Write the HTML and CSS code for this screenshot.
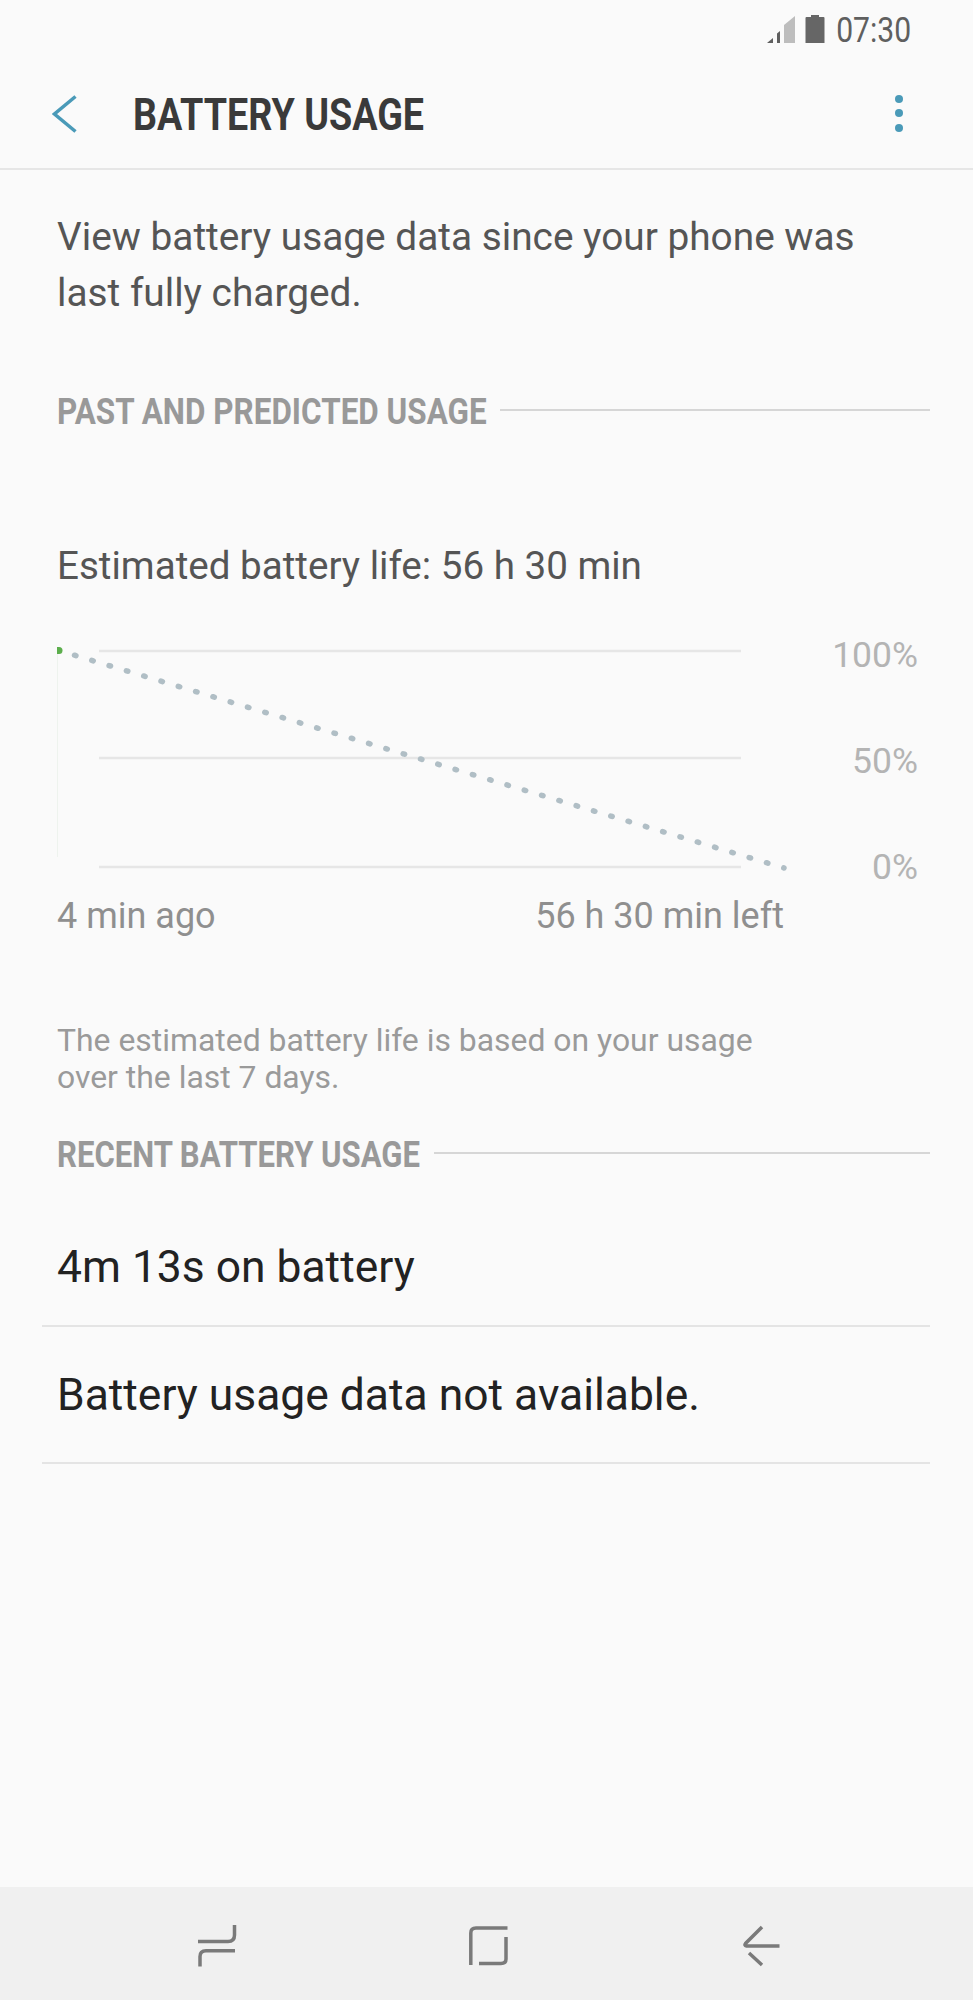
FILE: index.html
```html
<!DOCTYPE html>
<html lang="en">
<head>
<meta charset="utf-8">
<title>Battery usage</title>
<link rel="stylesheet" href="styles.css">
</head>
<body>
<div class="screen">
  <div class="status">
    <svg class="sig" width="30" height="30" viewBox="0 0 30 30"><path class="sig-on" d="M1 29 7 24V29Z"/><path class="sig-on" d="M11 29V19.500L14 17V29Z"/><path class="sig-off" d="M18 29V11L29 2V29Z"/></svg>
    <svg class="bat" width="20" height="30" viewBox="0 0 20 30"><path d="M1.500 3H6V1H14V3H18.500Q19.500 3 19.500 4V29H.5V4Q.5 3 1.500 3Z"/></svg>
    <span class="time">07:30</span>
  </div>
  <header class="appbar">
    <svg class="back" width="25" height="38" viewBox="0 0 25 38"><path d="M23.500 1.500 2.500 19 23.500 36.500"/></svg>
    <h1 class="title"><span>BATTERY USAGE</span></h1>
    <div class="more"><i></i><i></i><i></i></div>
  </header>
  <main class="content">
    <p class="intro">View battery usage data since your phone was last fully charged.</p>
    <div class="section first"><h2 class="w-past"><span>PAST AND PREDICTED USAGE</span></h2><div class="rule"></div></div>
    <p class="estimate">Estimated battery life: 56 h 30 min</p>
    <div class="chart">
      <svg class="plot" width="740" height="230" viewBox="0 0 740 230">
        <path class="axis" d="M0.500 3V210"/>
        <path class="grid" d="M42 4H684M42 111H684M42 220H684"/>
        <path class="pred" d="M17.500 8.200 727 221"/>
        <path class="start" d="M0 0H2A3.500 3.500 0 0 1 2 7H0Z"/>
      </svg>
      <div class="pct"><span>100%</span><span>50%</span><span>0%</span></div>
    </div>
    <div class="axis-labels"><span>4 min ago</span><span>56 h 30 min left</span></div>
    <p class="note">The estimated battery life is based on your usage<br>over the last 7 days.</p>
    <div class="section"><h2 class="w-recent"><span>RECENT BATTERY USAGE</span></h2><div class="rule"></div></div>
    <div class="row r1">4m 13s on battery</div>
    <div class="row r2">Battery usage data not available.</div>
  </main>
  <nav class="navbar">
    <svg width="38" height="44" viewBox="0 0 38 44"><path d="M0 18.500H30Q36.500 18.500 36.500 12V2M37 27.700H8Q2 27.700 2 33.500V43.500"/></svg>
    <svg width="40" height="42" viewBox="0 0 40 42"><path d="M.8 41V9Q.8 4 6 4H37.500M36 13V35Q36 39.500 31 39.500H9"/></svg>
    <svg width="40" height="44" viewBox="0 0 40 44"><path d="M18 4 1.500 20.500Q0 22.500 2.500 23H35.500M5 30 18 42"/></svg>
  </nav>
</div>
</body>
</html>
```
FILE: styles.css
```css
* { box-sizing: border-box; }
html, body { margin: 0; padding: 0; }
body { font-family: Roboto, "Liberation Sans", sans-serif; background: #fafafa; }
.screen { width: 973px; height: 2000px; display: flex; flex-direction: column; background: #fafafa; }
.status { height: 56px; display: flex; align-items: center; justify-content: flex-end; padding: 2px 62px 0 0; color: #5f5f5f; }
.sig { margin-right: 9px; }
.sig-on { fill: #5f5f5f; }
.sig-off { fill: #bdbdbd; }
.bat { fill: #666; margin-right: -1px; }
.time { font-size: 35px; margin-top: 2px; transform: scaleX(.86); transform-origin: right center; }
.appbar { height: 114px; display: flex; align-items: center; padding: 4px 0 0 52px; border-bottom: 2px solid #e6e6e6; }
.back { fill: none; stroke: #4a9ab8; stroke-width: 3.500px; flex: none; }
.title { margin: 0 0 0 56px; font-size: 45px; line-height: 1; font-weight: 700; color: #3a3a3a; flex: 1; }
.title span { display: inline-block; transform: scaleX(.837); transform-origin: left center; white-space: nowrap; }
.more { display: flex; flex-direction: column; gap: 6.500px; margin: 0 70px 2px 0; }
.more i { width: 8px; height: 8px; border-radius: 50%; background: #4a9ab8; }
.content { flex: 1; padding: 0 43px 0 57px; }
.intro { margin: 39px 0 0; width: 830px; font-size: 38.800px; line-height: 56px; color: #555; }
.section { display: flex; align-items: center; }
.section.first { margin-top: 71px; }
.section h2 { margin: 0; font-size: 37px; line-height: 40px; font-weight: 700; color: #999; white-space: nowrap; flex: none; }
.section h2 span { display: inline-block; transform: scaleX(.85); transform-origin: left center; }
.section h2.w-recent span { transform: scaleX(.84); }
.w-past { width: 443px; }
.w-recent { width: 377px; }
.rule { flex: 1; height: 2px; margin-bottom: 4px; background: #d6d6d6; }
.estimate { margin: 110px 0 0; font-size: 38.600px; line-height: 48px; color: #555; }
.chart { display: flex; margin-top: 57px; height: 230px; justify-content: space-between; padding-right: 12px; }
.plot { display: block; flex: none; overflow: visible; }
.axis { stroke: #eef3ee; stroke-width: 1px; fill: none; }
.grid { stroke: #e6e6e6; stroke-width: 2.500px; fill: none; }
.pred { stroke: #b0bec5; stroke-width: 5.500px; stroke-linecap: round; stroke-dasharray: 1.500 16.560; fill: none; }
.start { fill: #5cae4c; }
.pct { display: flex; flex-direction: column; align-items: flex-end; gap: 64px; margin-top: -13px; font-size: 35.500px; line-height: 42px; color: #b4b4b4; }
.axis-labels { display: flex; justify-content: space-between; width: 727px; margin-top: 15px; font-size: 36px; line-height: 48px; color: #8f8f8f; }
.note { margin: 82px 0 0; font-size: 31.900px; line-height: 37px; color: #9a9a9a; }
.section:not(.first) { margin-top: 39px; }
.row { margin-left: -15px; padding-left: 15px; color: #222; font-size: 44.400px; border-bottom: 2px solid #e4e4e4; display: flex; align-items: center; }
.r1 { height: 152px; padding-top: 33px; }
.r2 { height: 137px; }
.navbar { height: 113px; background: #f0f0f0; display: flex; align-items: center; padding: 3px 189px 0 198px; justify-content: space-between; }
.navbar svg { fill: none; stroke: #7a7a7a; stroke-width: 3.500px; overflow: visible; }
```
